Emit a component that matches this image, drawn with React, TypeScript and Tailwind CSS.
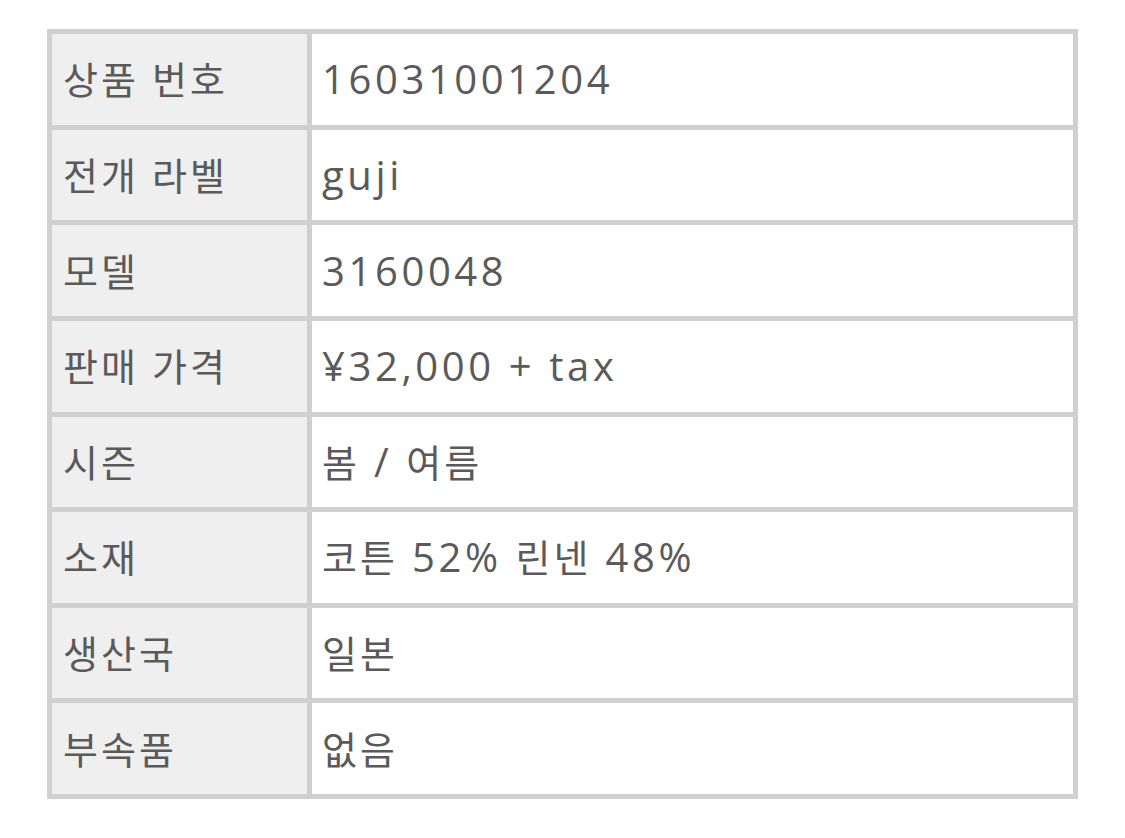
const rows: [string, string][] = [
  ["상품 번호", "16031001204"],
  ["전개 라벨", "guji"],
  ["모델", "3160048"],
  ["판매 가격", "¥32,000 + tax"],
  ["시즌", "봄 / 여름"],
  ["소재", "코튼 52% 린넨 48%"],
  ["생산국", "일본"],
  ["부속품", "없음"],
];

// latin runs come out a bit bigger and wider than the hangul in the shot
const Mixed: React.FC<{ text: string }> = ({ text }) => {
  const parts = text.match(/[\uac00-\ud7a3]+|[^\uac00-\ud7a3]+/g) ?? [];
  return (
    <span>
      {parts.map((p, i) =>
        /[\uac00-\ud7a3]/.test(p) ? (
          <span key={i}>{p}</span>
        ) : (
          <span key={i} className="text-[40px] tracking-[0.09em]" style={{}}>
            {p}
          </span>
        )
      )}
    </span>
  );
};

const App: React.FC = () => {
  return (
    <div className="w-[1125px] h-[838px] bg-white pt-[29px] pl-[47px]">
      <div
        className="w-[1031px] h-[770px] bg-[#d0d0d0] p-[5px] grid grid-cols-[255px_1fr] grid-rows-[repeat(8,1fr)] gap-[5px] text-[38px] leading-none tracking-[0.08em] text-[#5a5a5a]"
        style={{ fontFamily: '"Open Sans", "Noto Sans CJK KR", sans-serif' }}
      >
        {rows.map(([label, value]) => (
          <>
            <div key={label + "l"} className="bg-[#efefef] flex items-center pl-[11px]">
              {label}
            </div>
            <div key={label + "v"} className="bg-white flex items-center pl-[10px]">
              <Mixed text={value} />
            </div>
          </>
        ))}
      </div>
    </div>
  );
};

export default App;
